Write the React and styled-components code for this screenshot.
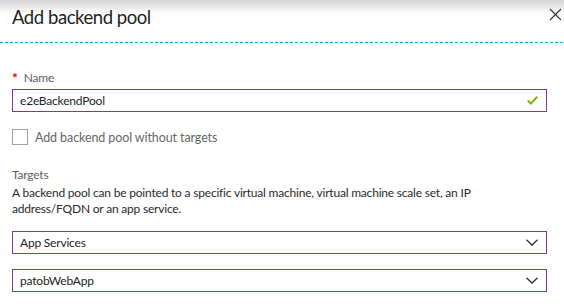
import styled, { createGlobalStyle } from "styled-components";

const GlobalStyle = createGlobalStyle`
  body {
    margin: 0;
    background: #fff;
    font-family: "Segoe UI", Lato, sans-serif;
    color: #252525;
  }
`;

const Blade = styled.div`
  width: 564px;
  height: 307px;
  overflow: hidden;
  background: #fff;
`;

const Header = styled.div`
  height: 42px;
  display: flex;
  align-items: flex-start;
  justify-content: space-between;
  padding: 0 2px 0 12px;
  background: linear-gradient(#d4d4d4 0, #fff 14px);
`;

const Title = styled.h1`
  margin: 0;
  padding-top: 3px;
  font-size: 18.5px;
  font-weight: 400;
  letter-spacing: -0.45px;
  line-height: 28px;
  color: #1e1e1e;
`;

const Close = styled.button`
  border: 0;
  background: none;
  padding: 0;
  margin-top: 8px;
  width: 13px;
  height: 13px;
  cursor: pointer;
`;

const Divider = styled.div`
  height: 1px;
  background-image: repeating-linear-gradient(
    to right,
    #1ba1da 0 3px,
    transparent 3px 5px
  );
`;

const Form = styled.div`
  padding: 0 17px 0 12px;
  display: flex;
  flex-direction: column;
  font-size: 12px;
  letter-spacing: -0.2px;
`;

const Label = styled.div`
  margin-top: ${(p) => p.$top}px;
  line-height: 16px;
  color: #606060;
  display: flex;
  align-items: center;
  gap: 6px;

  span {
    color: #e00000;
    font-size: 14px;
    font-weight: 700;
    line-height: 12px;
  }
`;

const Field = styled.div`
  margin-top: ${(p) => p.$top}px;
  height: 23px;
  box-sizing: border-box;
  border: 1px solid #8a30a6;
  display: flex;
  align-items: center;
  justify-content: space-between;
  padding: 0 8px 0 7px;
  color: #1e1e1e;
`;

const CheckRow = styled.label`
  margin-top: 17px;
  display: flex;
  align-items: center;
  gap: 7px;
  font-size: 12.5px;
  letter-spacing: -0.1px;
  color: #666;
`;

const Box = styled.span`
  width: 16px;
  height: 16px;
  box-sizing: border-box;
  border: 1px solid #a0a0a0;
  background: #fff;
`;

const Description = styled.p`
  margin: 2px 0 0;
  max-width: 490px;
  line-height: 16px;
  color: #2a2a2a;
`;

function Chevron() {
  return (
    <svg width="12" height="7" viewBox="0 0 12 7">
      <path d="M0.5 0.8 L6 6 L11.5 0.8" fill="none" stroke="#333" strokeWidth="1.3" />
    </svg>
  );
}

function Check() {
  return (
    <svg width="11" height="9" viewBox="0 0 11 9">
      <path d="M0.8 4.4 L3.8 7.6 L10.2 0.8" fill="none" stroke="#7cb500" strokeWidth="2" />
    </svg>
  );
}

export default function App() {
  return (
    <Blade>
      <GlobalStyle />
      <Header>
        <Title>Add backend pool</Title>
        <Close aria-label="Close">
          <svg width="13" height="13" viewBox="0 0 13 13">
            <path d="M1 1 L12 12 M12 1 L1 12" stroke="#333" strokeWidth="1.1" />
          </svg>
        </Close>
      </Header>
      <Divider />
      <Form>
        <Label $top={27}>
          <span>*</span>Name
        </Label>
        <Field $top={3}>
          e2eBackendPool
          <Check />
        </Field>
        <CheckRow>
          <Box />
          Add backend pool without targets
        </CheckRow>
        <Label $top={22}>Targets</Label>
        <Description>
          A backend pool can be pointed to a specific virtual machine, virtual machine scale set, an IP
          address/FQDN or an app service.
        </Description>
        <Field $top={14}>
          App Services
          <Chevron />
        </Field>
        <Field $top={15}>
          patobWebApp
          <Chevron />
        </Field>
      </Form>
    </Blade>
  );
}
